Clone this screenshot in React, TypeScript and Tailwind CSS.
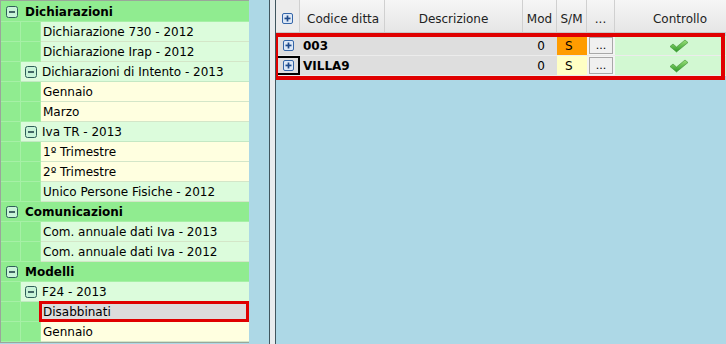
import React from "react";

type TreeNode = {
  label: string;
  level: 0 | 1 | 2;
  expander?: boolean;
  selected?: boolean;
};

const tree: TreeNode[] = [
  { label: "Dichiarazioni", level: 0 },
  { label: "Dichiarazione 730 - 2012", level: 1 },
  { label: "Dichiarazione Irap - 2012", level: 1 },
  { label: "Dichiarazioni di Intento - 2013", level: 1, expander: true },
  { label: "Gennaio", level: 2 },
  { label: "Marzo", level: 2 },
  { label: "Iva TR - 2013", level: 1, expander: true },
  { label: "1º Trimestre", level: 2 },
  { label: "2º Trimestre", level: 2 },
  { label: "Unico Persone Fisiche - 2012", level: 1 },
  { label: "Comunicazioni", level: 0 },
  { label: "Com. annuale dati Iva - 2013", level: 1 },
  { label: "Com. annuale dati Iva - 2012", level: 1 },
  { label: "Modelli", level: 0 },
  { label: "F24 - 2013", level: 1, expander: true },
  { label: "Disabbinati", level: 2, selected: true },
  { label: "Gennaio", level: 2 },
];

const rows = [
  { code: "003", mod: "0", sm: "S", smBg: "bg-[#ff9c00]", focused: false },
  { code: "VILLA9", mod: "0", sm: "S", smBg: "bg-[#ffffc4]", focused: true },
];

function MinusIcon() {
  return (
    <svg width="12" height="12" viewBox="0 0 12 12" className="shrink-0">
      <rect x="0.5" y="0.5" width="11" height="11" rx="2" fill="#c8f4d8" stroke="#2f5f5a" />
      <rect x="3" y="5.2" width="6" height="1.6" fill="#24464a" />
    </svg>
  );
}

function PlusIcon() {
  return (
    <svg width="11" height="11" viewBox="0 0 11 11" className="shrink-0">
      <rect x="0.5" y="0.5" width="10" height="10" rx="1.5" fill="#dde8f6" stroke="#3566a8" />
      <rect x="2.5" y="4.6" width="6" height="1.7" fill="#1f4a8a" />
      <rect x="4.65" y="2.5" width="1.7" height="6" fill="#1f4a8a" />
    </svg>
  );
}

function Check() {
  return (
    <svg width="20" height="14" viewBox="0 0 20 14">
      <defs>
        <linearGradient id="ck" x1="0" y1="0" x2="0" y2="1">
          <stop offset="0" stopColor="#9be07a" />
          <stop offset="1" stopColor="#2f9a2a" />
        </linearGradient>
      </defs>
      <path d="M1 7.5 L4 5 L7.5 8 L16 1 L19 3.5 L7.5 13 Z" fill="url(#ck)" stroke="#3c8f34" strokeWidth="0.6" />
    </svg>
  );
}

function Indent() {
  return <div className="w-5 shrink-0 bg-[#90ec90] border-r border-b border-[#a6f0a6]" />;
}

function TreeRow({ node }: { node: TreeNode }) {
  if (node.level === 0) {
    return (
      <div className="flex h-5 items-center bg-[#90ec90] border-b border-[#a6f0a6] font-bold">
        <span className="ml-[5px] flex"><MinusIcon /></span>
        <span className="ml-[7px]">{node.label}</span>
      </div>
    );
  }
  if (node.expander) {
    return (
      <div className="flex h-5">
        <Indent />
        <div className="flex flex-1 items-center bg-[#dcfcdc] border-b border-[#c4e8c4]">
          <span className="ml-[4px] flex"><MinusIcon /></span>
          <span className="ml-[5px]">{node.label}</span>
        </div>
      </div>
    );
  }
  const bg = node.selected ? "bg-[#dcdcdc]" : node.level === 2 ? "bg-[#ffffe0]" : "bg-[#dcfcdc]";
  return (
    <div className="flex h-5">
      <Indent />
      <Indent />
      <div className={`relative flex flex-1 items-center pl-[2px] border-b border-[#d4e6c8] ${bg}`}>
        {node.label}
        {node.selected && (
          <div className="absolute left-[-2px] right-0 top-[-1px] bottom-[-1px] border-[3px] border-[#e00000]" />
        )}
      </div>
    </div>
  );
}

export default function App() {
  return (
    <div
      className="flex h-[344px] w-[726px] overflow-hidden bg-[#add8e6] text-[12px] text-black"
      style={{ fontFamily: '"DejaVu Sans", Verdana, sans-serif' }}
    >
      {/* albero */}
      <div className="w-[249px] shrink-0 self-start border-l border-t border-[#9aa79a] bg-[#90ec90] pt-px">
        {tree.map((n, i) => (
          <TreeRow key={i} node={n} />
        ))}
        <div className="h-px bg-[#9aa79a]" />
      </div>

      <div className="w-5 shrink-0" />

      {/* griglia */}
      <div className="flex flex-1 border-l border-[#40565e] bg-[#e8ecee] pl-[5px]">
        <div className="relative flex-1 overflow-hidden border-l border-[#40565e] bg-[#add8e6]">
          <div className="flex h-[33px] w-max border-b border-[#c8c8c8] bg-gradient-to-b from-[#f6f6f6] to-[#e6e6e6] text-[#222]">
            <div className="flex w-6 items-center justify-center border-r border-[#d0d0d0] bg-[#ececec] pt-[5px]">
              <PlusIcon />
            </div>
            <div className="flex w-[85px] items-center border-r border-[#d0d0d0] pl-[7px] pt-[5px]">Codice ditta</div>
            <div className="flex w-[138px] items-center justify-center border-r border-[#d0d0d0] pt-[5px]">Descrizione</div>
            <div className="flex w-[34px] items-center justify-center border-r border-[#d0d0d0] pt-[5px]">Mod</div>
            <div className="flex w-[30px] items-center justify-center border-r border-[#d0d0d0] pt-[5px]">S/M</div>
            <div className="flex w-[28px] items-center justify-center border-r border-[#d0d0d0] pt-[5px]">...</div>
            <div className="flex w-[130px] items-center justify-center pt-[5px]">Controllo</div>
          </div>

          <div className="relative w-max py-[3px]">
            {rows.map((r) => (
              <div key={r.code} className="flex h-5 border-b border-[#ececec]">
                <div
                  className={`flex w-6 items-center justify-center bg-[#dedede] ${
                    r.focused ? "outline-2 -outline-offset-2 outline-black" : ""
                  }`}
                >
                  <PlusIcon />
                </div>
                <div className="flex w-[85px] items-center bg-[#dedede] pl-[3px] pt-px font-bold">{r.code}</div>
                <div className="w-[138px] bg-[#dedede]" />
                <div className="flex w-[34px] items-center justify-center bg-[#dedede] pl-[2px] pt-px">{r.mod}</div>
                <div className={`flex w-[30px] items-center pl-[8px] pt-px ${r.smBg}`}>{r.sm}</div>
                <div className="flex w-[28px] items-center justify-center bg-[#f4f4f4]">
                  <div className="flex h-[17px] w-[24px] items-center justify-center border border-[#a8a8a8] bg-[#f0f0f0] text-[11px] leading-none">
                    ...
                  </div>
                </div>
                <div className="flex w-[130px] items-center justify-center bg-[#d2f8d2] pr-[2px]">
                  <Check />
                </div>
              </div>
            ))}
            <div className="absolute left-[-2px] top-0 bottom-[-1px] w-[451px] border-4 border-[#e00000]" />
          </div>
        </div>
      </div>
    </div>
  );
}
